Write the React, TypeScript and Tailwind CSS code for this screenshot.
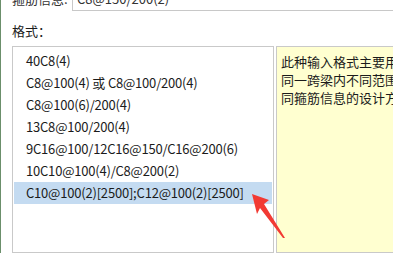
const formats = [
  '40C8(4)',
  'C8@100(4) 或 C8@100/200(4)',
  'C8@100(6)/200(4)',
  '13C8@100/200(4)',
  '9C16@100/12C16@150/C16@200(6)',
  '10C10@100(4)/C8@200(2)',
  'C10@100(2)[2500];C12@100(2)[2500]',
]

function PointerArrow() {
  return (
    <svg className="absolute left-[245px] top-[188px]" width="50" height="56" viewBox="245 188 50 56">
      <polygon
        points="252,194 269,200 264,204 285,238 283,238 260,208 257,214"
        fill="#f23a33"
      />
    </svg>
  )
}

export default function App() {
  return (
    <div className="relative w-[393px] h-[253px] overflow-hidden bg-white flex text-[#1b1b1b] font-['Microsoft_YaHei','Noto_Sans_CJK_SC',sans-serif] text-[13px]">
      <div className="w-[3px] bg-[#1d8a1f] border-r border-[#6b8f6b]" />
      <div className="flex-1 flex flex-col">
        <div className="flex items-center mt-[-13px] h-[24px] pl-[11px]">
          <span className="w-[60px] text-[#333]">箍筋信息:</span>
          <div className="flex-1 h-[24px] border border-[#c8c8c8] bg-white flex items-center pl-[4px] text-[#333]">
            C8@150/200(2)
          </div>
        </div>
        <div className="pl-[11px] mt-[12px] leading-[16px]">格式：</div>
        <div className="flex flex-1 mt-[7px] pl-[11px]">
          <div className="w-[262px] border border-[#c9c9c9] bg-white pt-[3px] px-[1px]">
            {formats.map((f, i) => (
              <div
                key={f}
                className={
                  'h-[22px] flex items-center pl-[12px] whitespace-nowrap tracking-[-0.2px] ' +
                  (i === formats.length - 1 ? 'bg-[#c4dbf1]' : '')
                }
              >
                {f}
              </div>
            ))}
          </div>
          <div className="flex-1 ml-[2px] border border-[#c9c9c9] border-r-0 bg-[#ffffd0] pt-[6px] pl-[4px] leading-[18px] whitespace-nowrap overflow-hidden">
            <div>此种输入格式主要用于</div>
            <div>同一跨梁内不同范围布置</div>
            <div>同箍筋信息的设计方式</div>
          </div>
        </div>
      </div>
      <PointerArrow />
    </div>
  )
}
